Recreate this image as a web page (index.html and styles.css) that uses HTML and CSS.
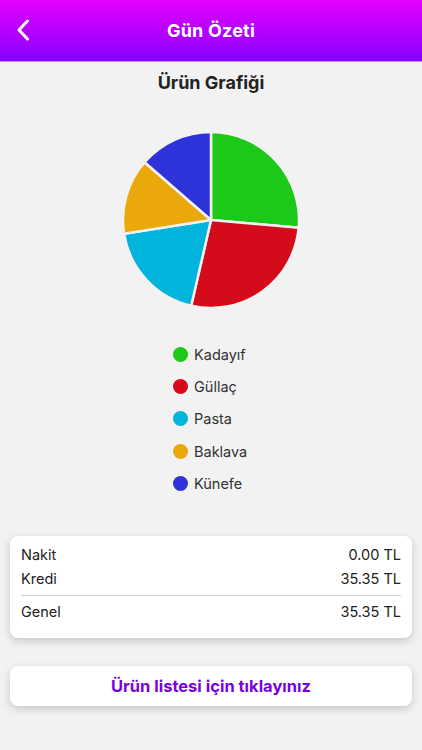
FILE: index.html
```html
<!DOCTYPE html>
<html lang="tr">
<head>
<meta charset="utf-8">
<title>Gün Özeti</title>
<link rel="stylesheet" href="styles.css">
</head>
<body>
<header class="navbar">
  <button class="back" aria-label="Geri">
    <svg width="14" height="22" viewBox="0 0 14 22"><path d="M11.5 2 L3 11 L11.5 20" fill="none" stroke="#fff" stroke-width="3" stroke-linecap="round" stroke-linejoin="round"/></svg>
  </button>
  <h1 class="nav-title">Gün Özeti</h1>
</header>
<main class="content">
  <h2 class="chart-title">Ürün Grafiği</h2>
  <div class="chart">
    <svg width="180" height="180" viewBox="-90 -90 180 180" id="pie"></svg>
  </div>
  <ul class="legend">
    <li><span class="dot green"></span>Kadayıf</li>
    <li><span class="dot red"></span>Güllaç</li>
    <li><span class="dot cyan"></span>Pasta</li>
    <li><span class="dot yellow"></span>Baklava</li>
    <li><span class="dot blue"></span>Künefe</li>
  </ul>
  <section class="card summary">
    <div class="row"><span>Nakit</span><span>0.00 TL</span></div>
    <div class="row"><span>Kredi</span><span>35.35 TL</span></div>
    <hr class="sep">
    <div class="row"><span>Genel</span><span>35.35 TL</span></div>
  </section>
  <button class="card list-btn">Ürün listesi için tıklayınız</button>
</main>
<script>
(function(){
  var slices=[[0,95,'#1dc918'],[95,193,'#d40b1a'],[193,261,'#00b4db'],[261,311,'#eba80a'],[311,360,'#2d33d9']];
  var r=88, svg=document.getElementById('pie'), h='';
  function pt(a){var t=(a-90)*Math.PI/180;return (r*Math.cos(t)).toFixed(2)+' '+(r*Math.sin(t)).toFixed(2);}
  slices.forEach(function(s){
    var large=(s[1]-s[0])>180?1:0;
    h+='<path d="M0 0 L'+pt(s[0])+' A'+r+' '+r+' 0 '+large+' 1 '+pt(s[1])+' Z" fill="'+s[2]+'" stroke="#f2f2f2" stroke-width="2.5" stroke-linejoin="round"/>';
  });
  svg.innerHTML=h;
})();
</script>
</body>
</html>
```
FILE: styles.css
```css
* { box-sizing: border-box; }
html, body { margin: 0; padding: 0; }
body {
  width: 422px;
  height: 750px;
  background: #f2f2f2;
  font-family: Inter, "Noto Sans", "Liberation Sans", sans-serif;
  color: #222;
  overflow: hidden;
}
.navbar {
  height: 62px;
  background: linear-gradient(to bottom, #e300ff 0%, #b100ff 55%, #8700ff 100%);
  border-bottom: 1px solid #c48cff;
  display: flex;
  align-items: center;
  justify-content: center;
  position: relative;
}
.back {
  position: absolute;
  left: 16px;
  top: 18px;
  background: none;
  border: 0;
  padding: 0;
  width: 18px;
  height: 24px;
  display: flex;
  align-items: center;
}
.nav-title {
  margin: 0;
  color: #fff;
  font-size: 18px;
  font-weight: 700;
  letter-spacing: 0.2px;
}
.content {
  display: flex;
  flex-direction: column;
  align-items: center;
  padding: 0 10px;
}
.chart-title {
  margin: 10px 0 0;
  height: 22px;
  line-height: 22px;
  font-size: 18px;
  font-weight: 700;
  color: #222;
}
.chart {
  margin-top: 36px;
  width: 180px;
  height: 180px;
}
.chart svg { display: block; }
.legend {
  list-style: none;
  margin: 34px 0 0 14px;
  padding: 0;
  display: flex;
  flex-direction: column;
  gap: 12.4px;
  width: 90px;
}
.legend li {
  display: flex;
  align-items: center;
  height: 20px;
  font-size: 14.5px;
  color: #333;
}
.dot {
  width: 15px;
  height: 15px;
  border-radius: 50%;
  margin-right: 6px;
  flex: none;
}
.green { background: #1dc918; }
.red { background: #d40b1a; }
.cyan { background: #00b4db; }
.yellow { background: #eba80a; }
.blue { background: #2d33d9; }
.card {
  width: 402px;
  background: #fff;
  border-radius: 8px;
  box-shadow: 0 3px 8px rgba(0,0,0,0.18);
}
.summary {
  margin-top: 42px;
  padding: 7px 11px 14px;
  font-size: 14.5px;
  color: #222;
}
.row {
  display: flex;
  justify-content: space-between;
  height: 24px;
  line-height: 24px;
}
.sep {
  border: 0;
  border-top: 1px solid #d0d0d0;
  margin: 4px 0 4px;
}
.list-btn {
  margin-top: 28px;
  height: 40px;
  border: 0;
  font-family: inherit;
  font-size: 16.5px;
  font-weight: 700;
  color: #7a00e0;
  cursor: pointer;
}
```
